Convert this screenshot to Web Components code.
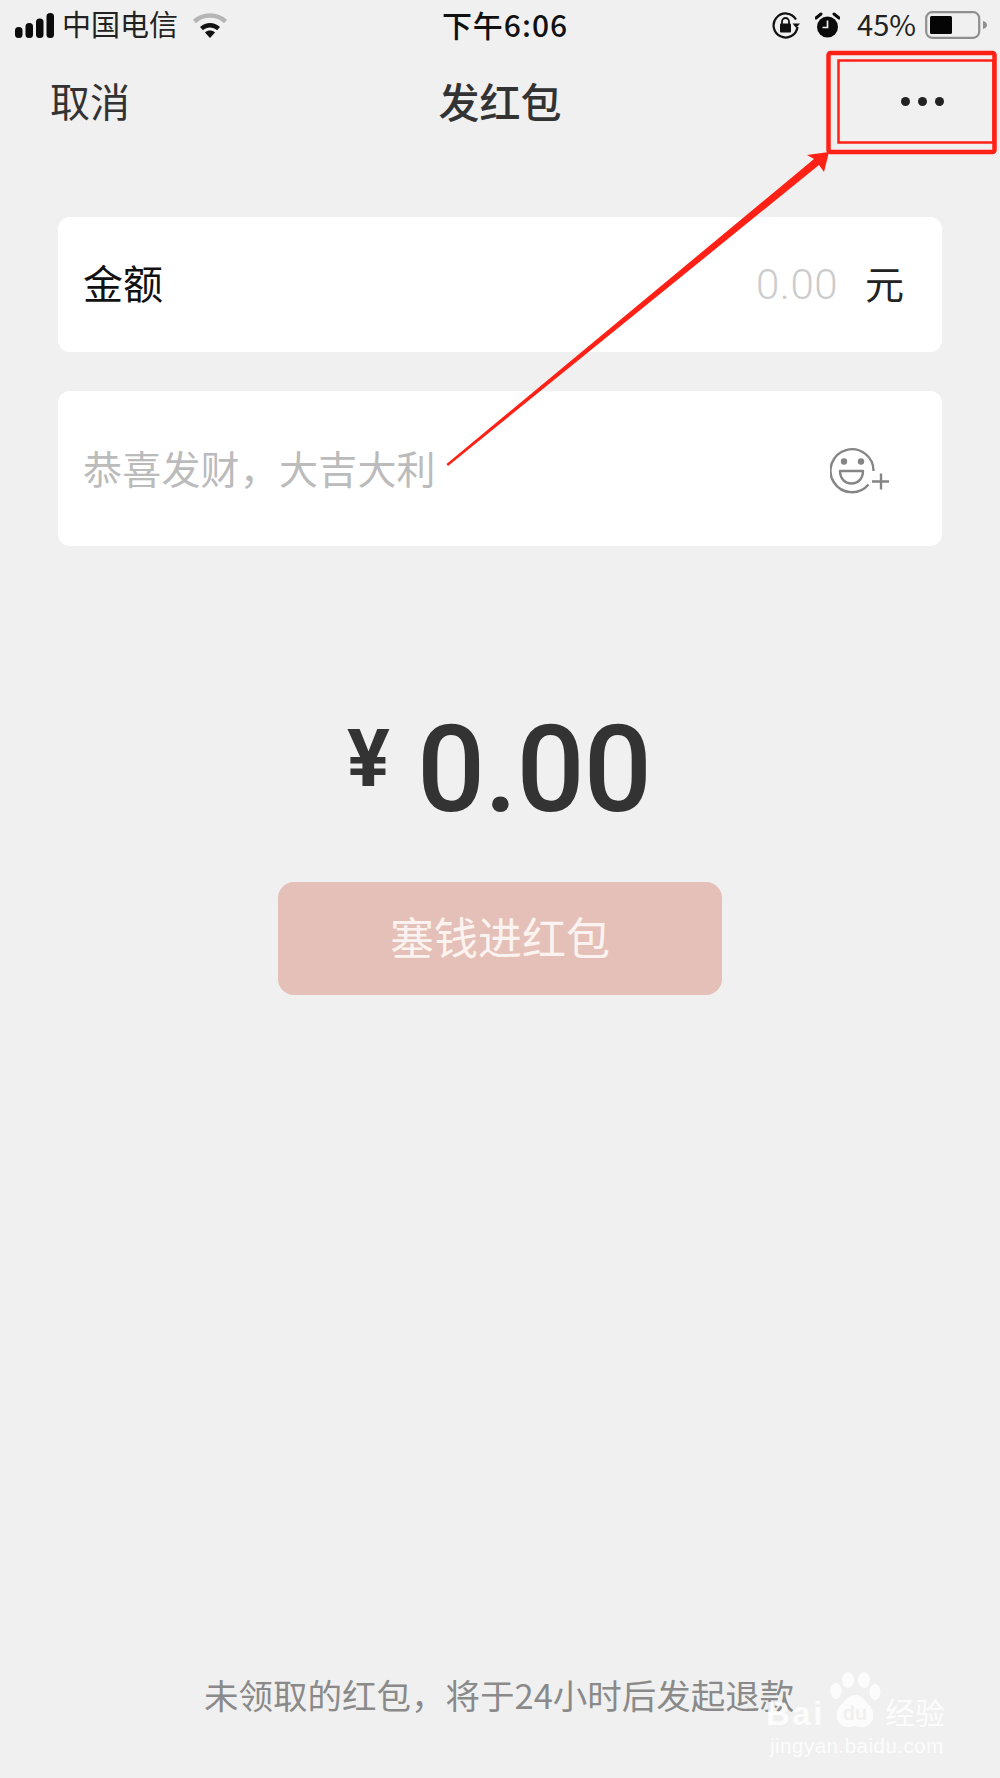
<!DOCTYPE html>
<html lang="zh">
<head>
<meta charset="utf-8">
<style>
  html, body { margin: 0; padding: 0; background: #f0f0f0; }
  body { font-family: "Noto Sans CJK SC", "Liberation Sans", sans-serif; }
</style>
</head>
<body>
<redpacket-page>
  <status-bar></status-bar>
  <nav-bar></nav-bar>
  <form-card></form-card>
  <greeting-card></greeting-card>
  <amount-display></amount-display>
  <send-button>塞钱进红包</send-button>
  <page-footer>未领取的红包，将于24小时后发起退款</page-footer>
  <red-annotation></red-annotation>
  <baidu-mark></baidu-mark>
</redpacket-page>

<script>
class RedpacketPage extends HTMLElement {
    constructor() {
        super();
        this.attachShadow({mode: 'open'}).innerHTML = `
        <style>
        :host { display: flex; flex-direction: column; position: relative; width: 1000px; height: 1778px; overflow: hidden; background: #f0f0f0; }
        </style>
        <slot></slot>`
    }
}

class StatusBar extends HTMLElement {
    constructor() {
        super();
        this.attachShadow({mode: 'open'}).innerHTML = `
        <style>
        :host { display: grid; grid-template-columns: 1fr auto 1fr; align-items: center; height: 50px; color: #222; font-size: 29px; }
        .left, .right { display: flex; align-items: center; }
        .left { padding-left: 15px; gap: 8px; }
        .left span { margin-bottom: 4px; }
        .right { justify-content: flex-end; padding-right: 12px; }
        .time { font-size: 30px; letter-spacing: 1px; font-weight: 500; color: #111; margin-left: 10px; margin-bottom: 3px; }
        .pct { font-size: 29px; margin: 0 9px 4px 17px; }
        svg { display: block; }
        </style>
        <div class="left">
            <svg width="39" height="25" viewBox="0 0 39 25"><g fill="#0b0b0b"><rect x="0" y="14" width="7.5" height="11" rx="3.5"/><rect x="10.500" y="10" width="7.500" height="15" rx="3.500"/><rect x="21" y="5.500" width="7.500" height="19.500" rx="3.500"/><rect x="31.500" y="0" width="7.500" height="25" rx="3.500"/></g></svg>
            <span>中国电信</span>
            <svg style="margin-left:7px" width="34" height="25" viewBox="0 0 34 25"><path d="M1.500 8.500C10 .5 24 .5 32.500 8.500" fill="none" stroke="#b5b5b5" stroke-width="4.500"/><path d="M7 14C13 8.500 21 8.500 27 14l-3 3.200C20 13.500 14 13.500 10 17.200z" fill="#111"/><path d="M12 19.500c3-2.600 7-2.600 10 0L17 25z" fill="#111"/></svg>
        </div>
        <div class="time">下午6:06</div>
        <div class="right">
            <svg width="28" height="27" viewBox="0 0 28 27"><path d="M24 7.500A12 12 0 1 0 25.500 15" fill="none" stroke="#111" stroke-width="2.200"/><path d="M20.500 11.500h7.500l-3.800 4.500z" fill="#111"/><rect x="8" y="11.500" width="11" height="9" rx="1" fill="#111"/><path d="M10 12V9.500a3.500 3.500 0 0 1 7 0V12" fill="none" stroke="#111" stroke-width="1.800"/></svg>
            <svg style="margin-left:15px" width="25" height="27" viewBox="0 0 25 27"><circle cx="12.500" cy="15" r="10.500" fill="#0b0b0b"/><path d="M12.500 8.500V15.500H7.500" fill="none" stroke="#f0f0f0" stroke-width="1.700"/><path d="M1 6l5-4M24 6l-5-4" stroke="#0b0b0b" stroke-width="3" stroke-linecap="round"/></svg>
            <span class="pct">45%</span>
            <svg width="63" height="28" viewBox="0 0 63 28"><rect x="1.200" y="1.200" width="53" height="25.600" rx="6" fill="none" stroke="#8f8f8f" stroke-width="2.200"/><rect x="5" y="5" width="22" height="18" rx="1.500" fill="#050505"/><path d="M58 10c2.500.8 4 2 4 4s-1.500 3.200-4 4z" fill="#8f8f8f"/></svg>
        </div>`
    }
}

class NavBar extends HTMLElement {
    constructor() {
        super();
        this.attachShadow({mode: 'open'}).innerHTML = `
        <style>
        :host { display: grid; grid-template-columns: 1fr auto 1fr; align-items: center; height: 102px; margin-bottom: 65px; color: #333; }
        .cancel { font-size: 40px; padding-left: 50px; margin-bottom: 2px; }
        .title { font-size: 41px; font-weight: 500; margin-bottom: 2px; }
        .more { display: flex; justify-content: flex-end; gap: 8px; padding-right: 56px; }
        .more i { width: 9px; height: 9px; border-radius: 50%; background: #222; }
        </style>
        <div class="cancel">取消</div>
        <div class="title">发红包</div>
        <div class="more"><i></i><i></i><i></i></div>`
    }
}

class FormCard extends HTMLElement {
    constructor() {
        super();
        this.attachShadow({mode: 'open'}).innerHTML = `
        <style>
        :host { display: flex; align-items: center; justify-content: space-between; box-sizing: border-box; width: 884px; height: 135px; margin: 0 0 39px 58px; padding: 0 38px 0 25px; background: #fff; border-radius: 12px; }
        .label { font-size: 40px; color: #111; margin-bottom: 6px; }
        .end { display: flex; align-items: center; gap: 27px; }
        .zero { font-size: 42px; color: #ccc; font-family: "Roboto", sans-serif; font-weight: 300; letter-spacing: .5px; }
        .unit { font-size: 39px; color: #222; margin-bottom: 5px; }
        </style>
        <div class="label">金额</div>
        <div class="end"><span class="zero">0.00</span><span class="unit">元</span></div>`
    }
}

class GreetingCard extends HTMLElement {
    constructor() {
        super();
        this.attachShadow({mode: 'open'}).innerHTML = `
        <style>
        :host { display: flex; align-items: center; justify-content: space-between; box-sizing: border-box; width: 884px; height: 155px; margin-left: 58px; padding: 0 50px 0 25px; background: #fff; border-radius: 12px; }
        .hint { font-size: 39px; color: #bbb; letter-spacing: .2px; margin-bottom: 3px; }
        svg { display: block; }
        </style>
        <div class="hint">恭喜发财，大吉大利</div>
        <svg width="62" height="52" viewBox="0 0 62 52">
            <path d="M38.500 41.500A21.500 21.500 0 1 1 43.500 28" fill="none" stroke="#858585" stroke-width="2.400"/>
            <circle cx="14" cy="18.500" r="3.200" fill="#858585"/><circle cx="31" cy="18.500" r="3.200" fill="#858585"/>
            <path d="M10 28H33C33 35.500 28 40.500 21.500 40.500S10 35.500 10 28z" fill="none" stroke="#858585" stroke-width="2.400" stroke-linejoin="round"/>
            <path d="M42 38.500H59M51 30.500V46.500" stroke="#858585" stroke-width="2.400"/>
        </svg>`
    }
}

class AmountDisplay extends HTMLElement {
    constructor() {
        super();
        this.attachShadow({mode: 'open'}).innerHTML = `
        <style>
        :host { display: flex; justify-content: center; align-items: flex-start; height: 130px; margin-top: 160px; padding-right: 2px; color: #333; font-family: "Roboto", sans-serif; font-weight: 500; line-height: 1; }
        .yen { font-size: 80px; font-weight: 700; margin: 13px 27px 0 0; }
        .num { font-size: 120px; letter-spacing: -1px; margin-top: 4px; }
        </style>
        <span class="yen">¥</span><span class="num">0.00</span>`
    }
}

class SendButton extends HTMLElement {
    constructor() {
        super();
        this.attachShadow({mode: 'open'}).innerHTML = `
        <style>
        :host { display: flex; align-items: center; justify-content: center; box-sizing: border-box; width: 444px; height: 113px; margin: 46px 0 0 278px; padding-bottom: 6px; background: #e5c0b8; border-radius: 16px; color: #fbf3ef; font-size: 44px; }
        </style>
        <slot></slot>`
    }
}

class PageFooter extends HTMLElement {
    constructor() {
        super();
        this.attachShadow({mode: 'open'}).innerHTML = `
        <style>
        :host { display: block; margin-top: auto; padding: 0 0 59px 204px; font-size: 34.500px; color: #8a8a8a; line-height: 50px; }
        </style>
        <slot></slot>`
    }
}

// the red marks someone drew on top of the screenshot
class RedAnnotation extends HTMLElement {
    constructor() {
        super();
        this.attachShadow({mode: 'open'}).innerHTML = `
        <style>
        :host { position: absolute; left: 0; top: 0; width: 1000px; height: 600px; pointer-events: none; }
        svg { display: block; }
        </style>
        <svg width="1000" height="600" viewBox="0 0 1000 600">
            <rect x="828.500" y="53" width="166" height="99" rx="2" fill="none" stroke="#ff2116" stroke-width="4.500"/>
            <rect x="838.500" y="60.500" width="155" height="82" fill="none" stroke="#ff2116" stroke-width="2.500"/>
            <path d="M448 466L446.500 464L814 159L807 155L829 152L824 172L819 165z" fill="#ff2116"/>
        </svg>`
    }
}

class BaiduMark extends HTMLElement {
    constructor() {
        super();
        this.attachShadow({mode: 'open'}).innerHTML = `
        <style>
        :host { position: absolute; left: 766px; top: 1672px; width: 185px; color: #fff; opacity: .85; font-family: "Liberation Sans", sans-serif; }
        .row { display: flex; align-items: flex-end; height: 56px; }
        .bai { font-size: 33px; font-weight: 700; line-height: 28px; letter-spacing: 2.500px; width: 62px; }
        .jy { font-size: 30px; line-height: 34px; font-family: "Noto Sans CJK SC", sans-serif; margin-left: 3px; }
        .url { font-size: 20.500px; line-height: 22px; margin: 7px 0 0 4px; letter-spacing: .5px; }
        svg { display: block; }
        </style>
        <div class="row">
            <span class="bai">Bai</span>
            <svg width="54" height="56" viewBox="0 0 54 56"><g fill="#fff"><ellipse cx="8" cy="19" rx="5.500" ry="8"/><ellipse cx="20" cy="8" rx="6" ry="8"/><ellipse cx="36" cy="8" rx="6" ry="8"/><ellipse cx="47" cy="20" rx="5.500" ry="8"/><path d="M27 23c7 0 10 6 15 11 6 7 4 21-8 21-3 0-4-1-7-1s-4 1-7 1C8 55 6 41 12 34c5-5 8-11 15-11z"/></g><text x="27" y="48" font-family="Liberation Sans" font-size="20" font-weight="700" fill="#f0f0f0" text-anchor="middle">du</text></svg>
            <span class="jy">经验</span>
        </div>
        <div class="url">jingyan.baidu.com</div>`
    }
}

customElements.define('redpacket-page', RedpacketPage)
customElements.define('status-bar', StatusBar)
customElements.define('nav-bar', NavBar)
customElements.define('form-card', FormCard)
customElements.define('greeting-card', GreetingCard)
customElements.define('amount-display', AmountDisplay)
customElements.define('send-button', SendButton)
customElements.define('page-footer', PageFooter)
customElements.define('red-annotation', RedAnnotation)
customElements.define('baidu-mark', BaiduMark)
</script>
</body>
</html>
